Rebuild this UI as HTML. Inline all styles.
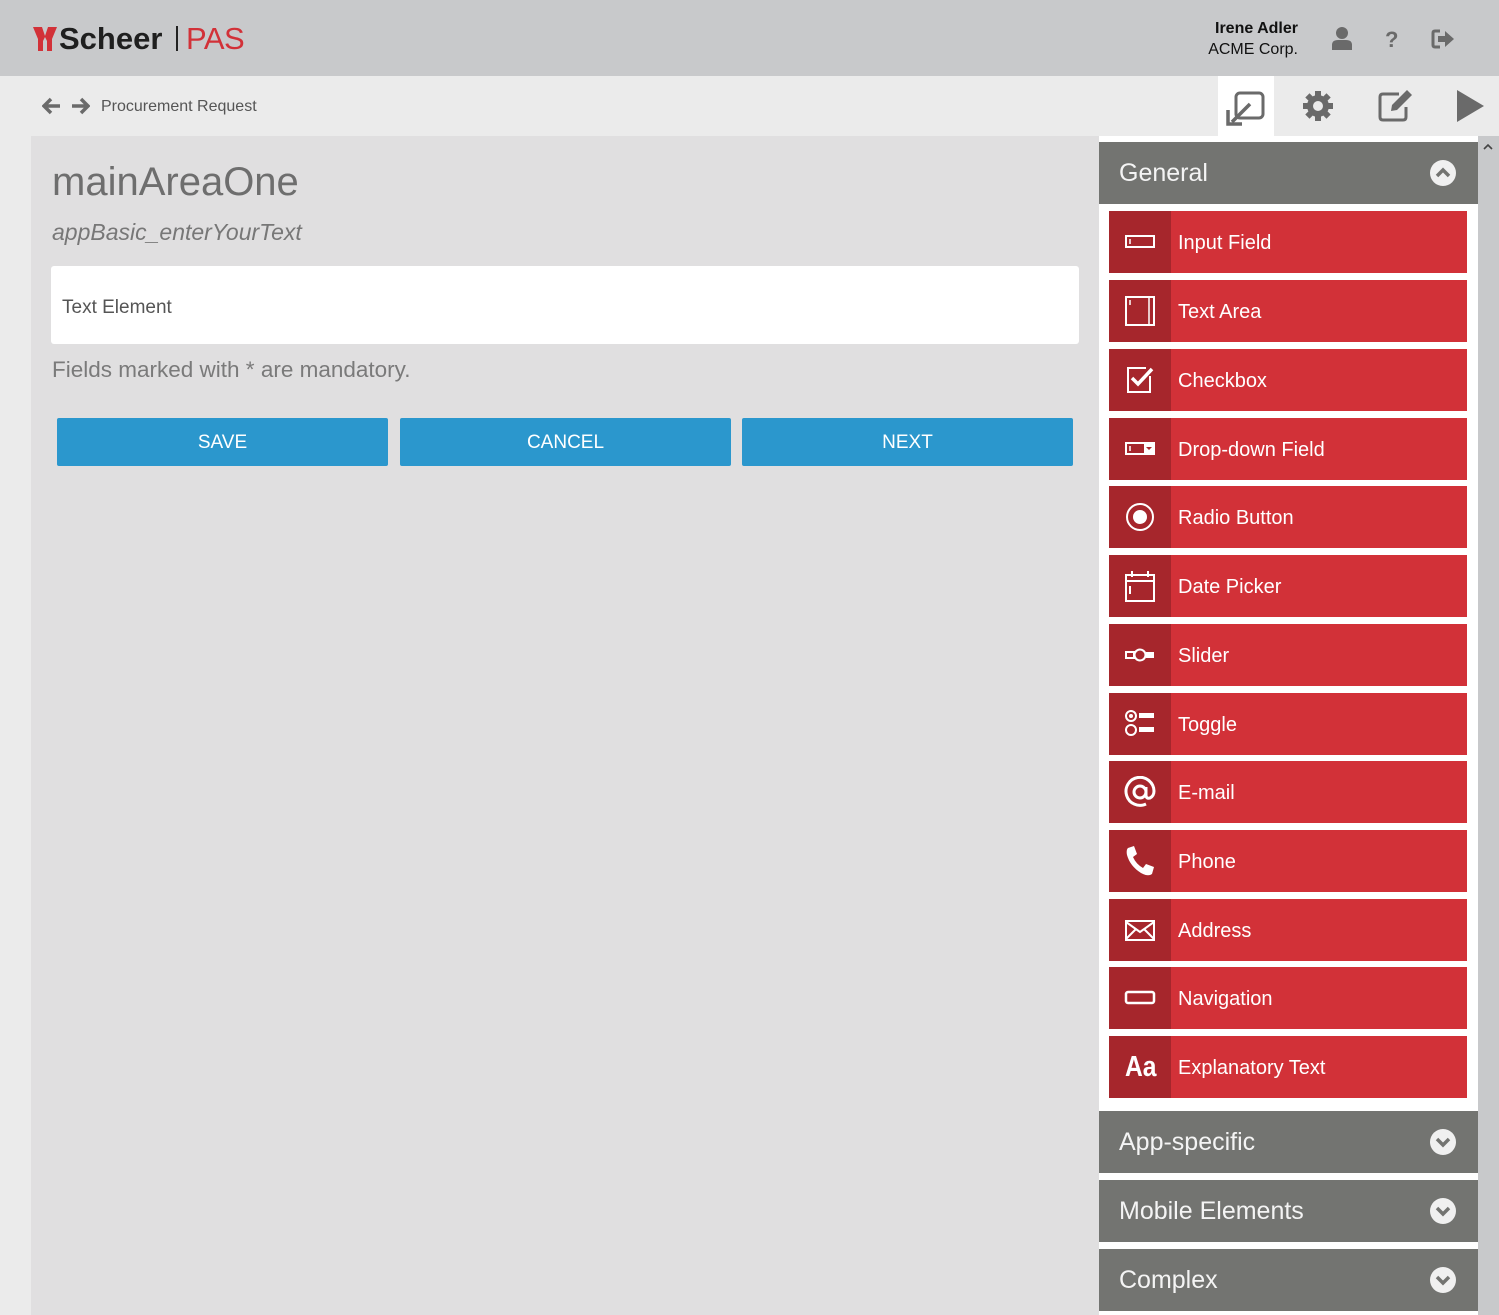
<!DOCTYPE html>
<html><head><meta charset="utf-8"><style>
*{margin:0;padding:0;box-sizing:border-box}
body{width:1499px;height:1315px;overflow:hidden;background:#ebebeb;font-family:"Liberation Sans",Arial,sans-serif;position:relative}
.a{position:absolute}
svg{display:block}
.hdr{left:0;top:0;width:1499px;height:76px;background:#c8c9cb}
.sub{left:0;top:76px;width:1499px;height:60px;background:#ebebeb}
.main{left:31px;top:136px;width:1068px;height:1179px;background:#e0dfe0}
.side{left:1099px;top:136px;width:379px;height:1179px;background:#fff}
.sb{left:1478px;top:136px;width:21px;height:1179px;background:#c8c9cb}
.sec{position:absolute;left:1099px;width:379px;height:62px;background:#737471;color:#f4f4f4;font-size:25px;line-height:62px;padding-left:20px}
.sec .c{position:absolute;right:22px;top:18px;width:26px;height:26px;border-radius:50%;background:#f0f0f0;line-height:0}
.it{position:absolute;left:1109px;width:358px;height:62px;background:#d23138;color:#fff;font-size:20px;line-height:64px;padding-left:69px}
.it .ic{position:absolute;left:0;top:0;width:62px;height:62px;background:#a6262c;line-height:0}
.it svg{position:absolute;left:15px;top:15px}
.btn{position:absolute;top:418px;height:48px;width:331px;background:#2b97cd;color:#fff;font-size:19px;text-align:center;line-height:50px;border-radius:2px}
</style></head><body>
<div class="a hdr"></div>
<div class="a sub"></div>
<div class="a main"></div>
<div class="a side"></div>
<div class="a sb"></div>
<div class="a" style="left:1218px;top:76px;width:56px;height:60px;background:#fff"></div>
<svg class="a" style="left:1481px;top:140px" width="14" height="12"><path d="M3 9 L7 5 L11 9" stroke="#444" stroke-width="1.6" fill="none"/></svg>

<!-- logo -->
<svg class="a" style="left:33px;top:27px" width="24" height="25"><path d="M0 0 H9 L12 9 L15 0 H24 L19 12 V24 H14 V14 L12 10 L10 14 V24 H5 V12 Z" fill="#d23138"/></svg>
<div class="a" style="left:59px;top:21px;font-size:31px;font-weight:bold;color:#1f1f1f">Scheer</div>
<div class="a" style="left:176px;top:26px;width:2px;height:25px;background:#222"></div>
<div class="a" style="left:186px;top:21px;font-size:31px;color:#d23138;letter-spacing:-0.5px">PAS</div>

<div class="a" style="left:1150px;top:20px;width:148px;text-align:right;font-size:16px;font-weight:bold;color:#111">Irene Adler</div>
<div class="a" style="left:1150px;top:41px;width:148px;text-align:right;font-size:16px;color:#111">ACME Corp.</div>
<svg class="a" style="left:1330px;top:26px" width="24" height="24"><circle cx="12" cy="7" r="6" fill="#6a6a6a"/><path d="M2 24 V19 Q2 14 8 14 H16 Q22 14 22 19 V24Z" fill="#6a6a6a"/></svg>
<div class="a" style="left:1385px;top:27px;font-size:22px;font-weight:bold;color:#6a6a6a">?</div>
<svg class="a" style="left:1431px;top:29px" width="24" height="20"><path d="M9 2 H4 Q2 2 2 4 V16 Q2 18 4 18 H9" stroke="#6a6a6a" stroke-width="3" fill="none"/><path d="M7 7 H14 V2 L23 10 L14 18 V13 H7Z" fill="#6a6a6a"/></svg>

<svg class="a" style="left:42px;top:97px" width="20" height="18"><path d="M9 2 L2 9 L9 16 M2 9 H18" stroke="#6a6a6a" stroke-width="3.5" fill="none"/></svg>
<svg class="a" style="left:70px;top:97px" width="20" height="18"><path d="M11 2 L18 9 L11 16 M18 9 H2" stroke="#6a6a6a" stroke-width="3.5" fill="none"/></svg>
<div class="a" style="left:101px;top:98px;font-size:16px;color:#555">Procurement Request</div>

<svg class="a" style="left:1226px;top:90px" width="40" height="36"><rect x="10" y="3" width="27" height="25" rx="4" stroke="#6a6a6a" stroke-width="3" fill="none"/><path d="M24 14 L6 32" stroke="#6a6a6a" stroke-width="3.5"/><path d="M2 20 V34 H16" stroke="#6a6a6a" stroke-width="3.5" fill="none"/></svg>
<svg class="a" style="left:1302px;top:90px" width="32" height="32" viewBox="0 0 32 32"><g fill="#6a6a6a"><circle cx="16" cy="16" r="11"/><rect x="13" y="1" width="6" height="30"/><rect x="1" y="13" width="30" height="6"/><rect x="13" y="1" width="6" height="30" transform="rotate(45 16 16)"/><rect x="13" y="1" width="6" height="30" transform="rotate(-45 16 16)"/></g><circle cx="16" cy="16" r="5" fill="#ebebeb"/></svg>
<svg class="a" style="left:1377px;top:89px" width="38" height="34"><path d="M22 5 H6 Q3 5 3 8 V28 Q3 31 6 31 H26 Q29 31 29 28 V18" stroke="#6a6a6a" stroke-width="3" fill="none"/><path d="M14 22 L15 16 L30 1 L35 6 L20 21Z" fill="#6a6a6a"/></svg>
<svg class="a" style="left:1455px;top:89px" width="30" height="34"><path d="M2 1 L29 17 L2 33Z" fill="#6a6a6a"/></svg>

<div class="a" style="left:52px;top:160px;font-size:40px;color:#6e6e6e">mainAreaOne</div>
<div class="a" style="left:52px;top:219px;font-size:23px;font-style:italic;color:#777">appBasic_enterYourText</div>
<div class="a" style="left:51px;top:266px;width:1028px;height:78px;background:#fff;border-radius:3px"></div>
<div class="a" style="left:62px;top:297px;font-size:19px;color:#555">Text Element</div>
<div class="a" style="left:52px;top:357px;font-size:22.5px;color:#7a7a7a">Fields marked with * are mandatory.</div>
<div class="btn" style="left:57px">SAVE</div>
<div class="btn" style="left:400px">CANCEL</div>
<div class="btn" style="left:742px">NEXT</div>

<div class="sec" style="top:142px">General<div class="c"><svg width="26" height="26"><path d="M7 16 L13 10 L19 16" stroke="#737471" stroke-width="3.5" fill="none"/></svg></div></div>
<div class="sec" style="top:1111px">App-specific<div class="c"><svg width="26" height="26"><path d="M7 10 L13 16 L19 10" stroke="#737471" stroke-width="3.5" fill="none"/></svg></div></div>
<div class="sec" style="top:1180px">Mobile Elements<div class="c"><svg width="26" height="26"><path d="M7 10 L13 16 L19 10" stroke="#737471" stroke-width="3.5" fill="none"/></svg></div></div>
<div class="sec" style="top:1249px">Complex<div class="c"><svg width="26" height="26"><path d="M7 10 L13 16 L19 10" stroke="#737471" stroke-width="3.5" fill="none"/></svg></div></div>

<div class="it" style="top:211px"><div class="ic"><svg width="32" height="32"><rect x="2" y="10" width="28" height="11" stroke="#fff" stroke-width="2" fill="none"/><path d="M6 13 V18" stroke="#fff" stroke-width="1.5"/></svg></div>Input Field</div>
<div class="it" style="top:280px"><div class="ic"><svg width="32" height="32"><rect x="2" y="2" width="28" height="28" stroke="#fff" stroke-width="2" fill="none"/><path d="M6 5 V10 M25 3 V29" stroke="#fff" stroke-width="1.5"/></svg></div>Text Area</div>
<div class="it" style="top:349px"><div class="ic"><svg width="32" height="32"><path d="M26 12 V28 H4 V4 H22" stroke="#fff" stroke-width="2" fill="none"/><path d="M8 14 L14 20 L28 5" stroke="#fff" stroke-width="3.5" fill="none"/></svg></div>Checkbox</div>
<div class="it" style="top:418px"><div class="ic"><svg width="32" height="32"><rect x="2" y="10" width="28" height="11" stroke="#fff" stroke-width="2" fill="none"/><rect x="20" y="10" width="10" height="11" fill="#fff"/><path d="M22 14 H28 L25 17Z" fill="#a6262c"/><path d="M6 13 V18" stroke="#fff" stroke-width="1.5"/></svg></div>Drop-down Field</div>
<div class="it" style="top:486px"><div class="ic"><svg width="32" height="32"><circle cx="16" cy="16" r="13" stroke="#fff" stroke-width="2" fill="none"/><circle cx="16" cy="16" r="7" fill="#fff"/></svg></div>Radio Button</div>
<div class="it" style="top:555px"><div class="ic"><svg width="32" height="32"><path d="M2 5 H30 V31 H2Z M2 11 H30" stroke="#fff" stroke-width="2" fill="none"/><path d="M8 1 V7 M24 1 V7 M6 16 V24" stroke="#fff" stroke-width="2"/></svg></div>Date Picker</div>
<div class="it" style="top:624px"><div class="ic"><svg width="32" height="32"><rect x="2" y="13" width="8" height="6" stroke="#fff" stroke-width="2" fill="none"/><circle cx="16" cy="16" r="5.5" stroke="#fff" stroke-width="2" fill="none"/><rect x="22" y="13" width="8" height="6" fill="#fff"/></svg></div>Slider</div>
<div class="it" style="top:693px"><div class="ic"><svg width="32" height="32"><circle cx="7" cy="8" r="5" stroke="#fff" stroke-width="2" fill="none"/><circle cx="7" cy="8" r="2" fill="#fff"/><circle cx="7" cy="22" r="5" stroke="#fff" stroke-width="2" fill="none"/><rect x="15" y="5" width="15" height="5" fill="#fff"/><rect x="15" y="19" width="15" height="5" fill="#fff"/></svg></div>Toggle</div>
<div class="it" style="top:761px"><div class="ic"><svg width="32" height="32"><circle cx="16" cy="16" r="6" stroke="#fff" stroke-width="3" fill="none"/><path d="M22 11 V19 Q22 23 26 22 Q30 20 30 15 A14 14 0 1 0 22 28" stroke="#fff" stroke-width="3" fill="none"/></svg></div>E-mail</div>
<div class="it" style="top:830px"><div class="ic"><svg width="32" height="32"><path d="M4 3 L10 1 L13 9 L9 12 Q12 19 19 23 L22 19 L30 22 L28 29 Q24 32 17 28 Q6 21 3 10 Q2 5 4 3Z" fill="#fff"/></svg></div>Phone</div>
<div class="it" style="top:899px"><div class="ic"><svg width="32" height="32"><rect x="2" y="7" width="28" height="19" stroke="#fff" stroke-width="2" fill="none"/><path d="M2 8 L16 18 L30 8 M2 25 L12 15 M30 25 L20 15" stroke="#fff" stroke-width="2" fill="none"/></svg></div>Address</div>
<div class="it" style="top:967px"><div class="ic"><svg width="32" height="32"><rect x="2" y="10" width="28" height="11" rx="2" stroke="#fff" stroke-width="2.5" fill="none"/></svg></div>Navigation</div>
<div class="it" style="top:1036px"><div class="ic"><div style="position:absolute;left:16px;top:31px;font-size:29px;font-weight:bold;color:#fff;line-height:0;transform:scaleX(0.85);transform-origin:left">Aa</div></div>Explanatory Text</div>
</body></html>
